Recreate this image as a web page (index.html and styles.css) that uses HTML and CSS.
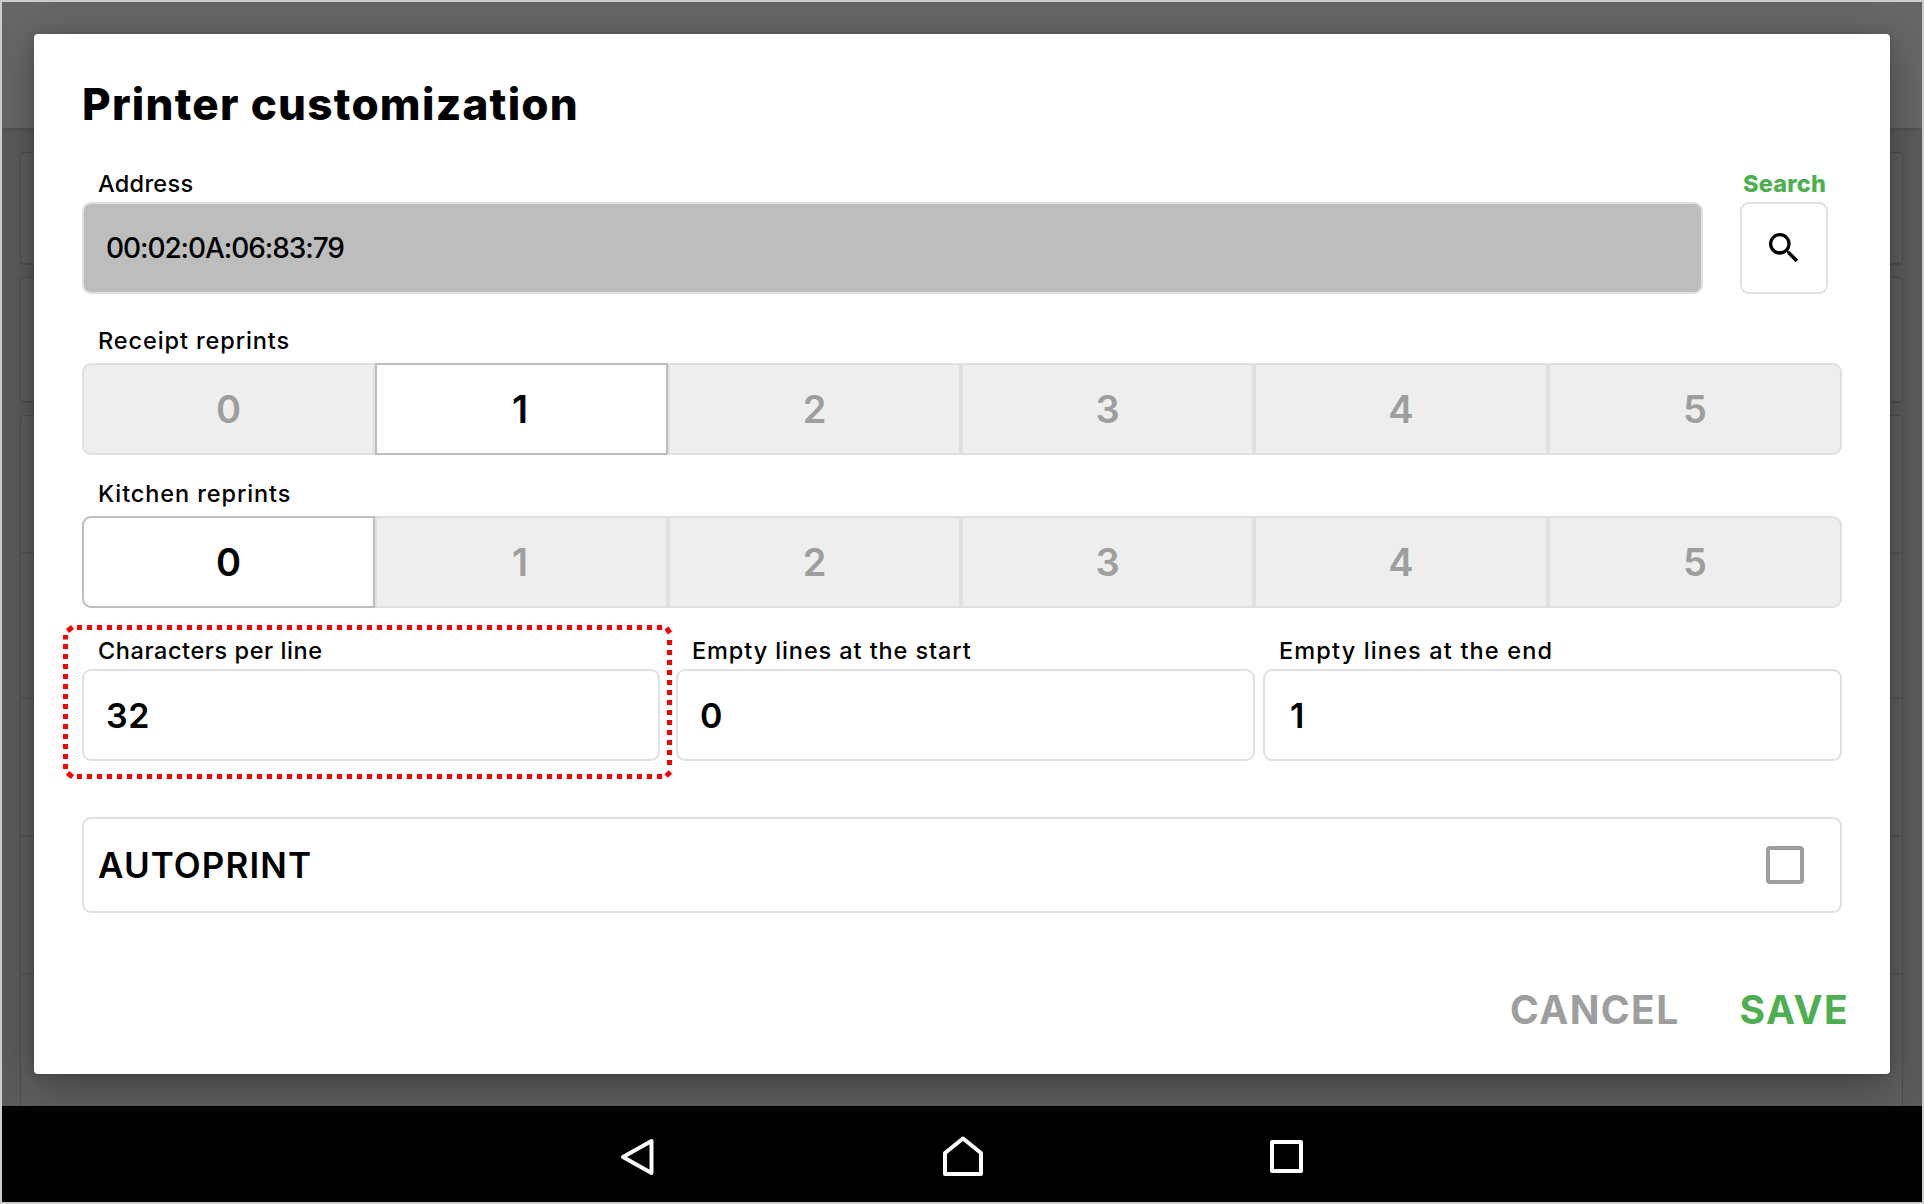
FILE: index.html
```html
<!DOCTYPE html>
<html lang="en">
<head>
<meta charset="utf-8">
<title>Printer customization</title>
<link rel="stylesheet" href="styles.css">
</head>
<body>
<div class="device">
  <div class="screen">
    <div class="backdrop">
      <div class="topbar"></div>
      <div class="panel panel-a"></div>
      <div class="panel panel-b"></div>
      <div class="panel panel-list"><i></i><i></i><i></i><i></i><i></i></div>
    </div>
    <main class="dialog">
      <h1 class="title">Printer customization</h1>
      <section class="address">
        <div class="address-main">
          <label class="label label-address">Address</label>
          <div class="field field-disabled">00:02:0A:06:83:79</div>
        </div>
        <div class="search">
          <div class="label label-search">Search</div>
          <button class="search-button" aria-label="Search">
            <svg width="40" height="40" viewBox="0 0 24 24"><path d="M15.5 14h-.79l-.28-.27A6.471 6.471 0 0 0 16 9.5 6.5 6.5 0 1 0 9.5 16c1.61 0 3.09-.59 4.23-1.57l.27.28v.79l5 4.99L20.49 19l-4.99-5zm-6 0C7.01 14 5 11.99 5 9.5S7.01 5 9.5 5 14 7.01 14 9.5 11.99 14 9.5 14z"/></svg>
          </button>
        </div>
      </section>
      <section class="reprints receipt">
        <div class="label">Receipt reprints</div>
        <div class="segments"><span>0</span><span class="selected">1</span><span>2</span><span>3</span><span>4</span><span>5</span></div>
      </section>
      <section class="reprints kitchen">
        <div class="label">Kitchen reprints</div>
        <div class="segments"><span class="selected">0</span><span>1</span><span>2</span><span>3</span><span>4</span><span>5</span></div>
      </section>
      <section class="lines">
        <div class="line-item highlighted">
          <label class="label label-chars">Characters per line</label>
          <div class="field">32</div>
          <svg class="highlight" width="610" height="155" viewBox="0 0 610 155">
            <path d="M14 2.5H600M14 151.500H600" stroke-dasharray="5 5"/>
            <path d="M2.5 10V14.500M2.5 19V147" stroke-dasharray="5 5"/>
            <path d="M606.5 15V145" stroke-dasharray="5 5"/>
            <path d="M4.500 6l5-4M603.500 3l3.500 5M4.500 148l5 4M603 151l4.500-4"/>
          </svg>
        </div>
        <div class="line-item">
          <label class="label label-start">Empty lines at the start</label>
          <div class="field">0</div>
        </div>
        <div class="line-item">
          <label class="label label-end">Empty lines at the end</label>
          <div class="field field-end">1</div>
        </div>
      </section>
      <section class="autoprint">AUTOPRINT<i class="checkbox"></i></section>
      <footer class="actions"><button class="cancel">CANCEL</button><button class="save">SAVE</button></footer>
    </main>
  </div>
  <nav class="navbar">
    <svg width="34" height="38" viewBox="0 0 34 38"><path d="M31.5 3V35L3 19Z"/></svg>
    <svg class="home" width="40" height="40" viewBox="0 0 40 40"><path d="M2 38V17L20 2.5L38 17V38Z"/></svg>
    <svg width="34" height="34" viewBox="0 0 34 34"><path d="M2 2H31V31H2Z"/></svg>
  </nav>
</div>
</body>
</html>
```
FILE: styles.css
```css
* { box-sizing: border-box; }
body { margin: 0; font-family: Inter, "Liberation Sans", sans-serif; font-weight: 500; color: #000; }
button { border: 0; padding: 0; background: none; font: inherit; }

.device { width: 1924px; height: 1204px; border: 2px solid #ccc; display: flex; flex-direction: column; background: #000; }
.screen { position: relative; height: 1104px; overflow: hidden; background: #5b5b5b; }

/* Dimmed page behind the dialog */
.backdrop { height: 1104px; display: flex; flex-direction: column; }
.topbar { height: 126px; background: #666; box-shadow: 0 1px 5px #4b4b4b; margin-bottom: 24px; flex: none; }
.panel { margin: 0 19px 0 18px; border: 1px solid #4e4e4e; border-bottom-width: 2px; border-radius: 4px; background: #5e5e5e; flex: none; }
.panel-a { height: 113px; margin-bottom: 12px; }
.panel-b { height: 126px; margin-bottom: 12px; }
.panel-list { height: 720px; }
.panel-list i { display: block; height: 138px; border-bottom: 2px solid #555; }
.panel-list i:nth-child(2) { height: 145px; }

.dialog { position: absolute; left: 32px; top: 32px; width: 1856px; height: 1040px; padding: 0 48px; background: #fff; border-radius: 4px; box-shadow: 0 12px 40px rgba(0,0,0,.3), 0 0 8px rgba(0,0,0,.14); }
.title { margin: 0; height: 141px; line-height: 141px; font-size: 44px; font-weight: 800; letter-spacing: 1.25px; white-space: nowrap; }

.label { display: block; height: 27px; line-height: 18px; padding-left: 16px; font-size: 23.5px; letter-spacing: .9px; white-space: nowrap; }
.label-address { letter-spacing: .3px; }
.label-chars { letter-spacing: .58px; }
.label-end { letter-spacing: 1.15px; }
.field { display: flex; align-items: center; height: 92px; padding-left: 22px; border: 2px solid #e0e0e0; border-radius: 9px; font-size: 34px; font-weight: 600; letter-spacing: .6px; }
.field-disabled { background: #bdbdbd; font-size: 28px; font-weight: 500; letter-spacing: -1.07px; }
.field-end { padding-left: 25px; }

.address { display: flex; gap: 37px; }
.address-main { width: 1621px; }
.search { width: 88px; }
.label-search { padding-left: 3px; font-weight: 800; letter-spacing: .2px; color: #4caf50; }
.search-button { display: grid; place-items: center; width: 88px; height: 92px; border: 2px solid #e0e0e0; border-radius: 9px; }

.receipt { margin-top: 38px; }
.kitchen { margin-top: 30px; }
.reprints .label { height: 31px; }
.segments { display: grid; grid-template-columns: repeat(4, 293px) 294px 294px; height: 92px; font-size: 38px; font-weight: 600; }
.segments span { display: grid; place-items: center; border: 2px solid #e0e0e0; background: #eee; color: #9e9e9e; }
.segments span:nth-child(2) { padding-right: 3px; }
.segments span:first-child { border-radius: 9px 0 0 9px; }
.segments span:last-child { border-radius: 0 9px 9px 0; }
.segments .selected { background: #fff; border-color: #bdbdbd; color: #000; }

.lines { display: grid; grid-template-columns: 586px 579px 579px; column-gap: 8px; margin-top: 34px; }
.line-item { position: relative; }
.highlighted { padding-right: 8px; }
.highlight { position: absolute; left: -19px; top: -17px; fill: none; stroke: red; stroke-width: 5; }

.autoprint { display: flex; align-items: center; justify-content: space-between; height: 96px; margin-top: 56px; padding: 0 36px 0 14px; border: 2px solid #e0e0e0; border-radius: 9px; font-size: 35px; font-weight: 600; letter-spacing: 1.1px; }
.checkbox { width: 38px; height: 38px; border: 4px solid #9e9e9e; border-radius: 4px; }
.actions { display: flex; justify-content: flex-end; gap: 60px; margin: 77px -7px 0 0; font-size: 39px; font-weight: 700; line-height: 40px; }
.actions button { letter-spacing: 1.4px; }
.cancel { color: #9e9e9e; }
.save { color: #4caf50; }

.navbar { height: 96px; display: flex; align-items: center; padding: 6px 0 0 618px; gap: 288px; }
.navbar svg { fill: none; stroke: #fff; stroke-width: 4; stroke-linejoin: round; }
.navbar .home { margin: -2px -1px 0 1px; }
```
